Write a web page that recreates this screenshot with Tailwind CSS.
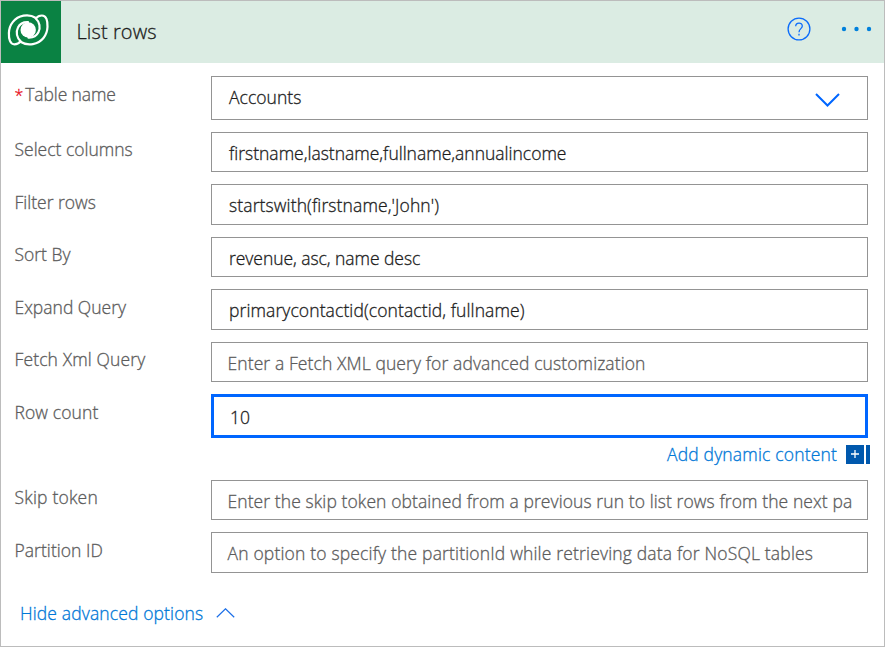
<!DOCTYPE html>
<html lang="en">
<head>
<meta charset="utf-8">
<title>List rows</title>
<script src="https://cdn.jsdelivr.net/npm/@tailwindcss/browser@4"></script>
</head>
<body class="bg-white">
<main class="w-[885px] h-[647px] border border-[#bcbcbc] bg-white overflow-hidden font-['Open_Sans','Noto_Sans',sans-serif] font-light text-[17.5px] leading-6 [-webkit-text-stroke:0.3px] text-[#5c5c5c]">
  <header class="flex h-[62px] items-center bg-[#dbece3]">
    <div class="h-[62px] w-[60px] bg-[#0a8243]">
      <svg class="size-full" viewBox="0 0 60 62" fill="none" stroke="#fff" stroke-width="2.200" stroke-linecap="round" stroke-linejoin="round">
        <circle cx="27.200" cy="28.900" r="7.700" fill="#fff" stroke="none"/>
        <path id="lobe" d="M35 17C31 14.500 27 13.800 22.500 14.700C13.500 16.500 8.200 23.500 7.900 32C7.700 38 9 43.300 13.500 43.300C16 43.300 18 42.300 19.700 40.300C15.800 37 14.600 31 17 26.500C19 22.500 22.500 21 27 21.200"/>
        <use href="#lobe" transform="rotate(180 27.200 28.900)"/>
      </svg>
    </div>
    <h1 class="ml-[15.500px] flex-1 text-[20px] leading-7 tracking-[0.1px] text-[#1c1c1c] font-light">List rows</h1>
    <svg class="mr-[29px] mb-[6px] h-6 w-6" viewBox="0 0 24 24" fill="none" stroke="#0b6cfb" stroke-width="1.300">
      <circle cx="12" cy="12" r="10.900"/>
      <path d="M8.700 9.300C8.700 5 15.300 5 15.300 9.100C15.300 11.700 12 11.700 12 15.200"/>
      <path d="M12 16.800v1.700"/>
    </svg>
    <svg class="mr-[12.500px] mb-[6px] h-2 w-8" viewBox="0 0 32 8" fill="#0080dc">
      <circle cx="4" cy="4" r="2.200"/><circle cx="16.500" cy="4" r="2.200"/><circle cx="29" cy="4" r="2.200"/>
    </svg>
  </header>
  <form class="pt-[13px] pl-[13.500px] pr-4">
    <div class="flex h-11 justify-between">
      <label class="pt-1.5 tracking-[-0.1px]"><span class="text-[#e81123] mr-[2px] text-[16px]">*</span>Table name</label>
      <div class="flex w-[657px] items-center justify-between border border-[#949494] pl-[17px] pr-[27px] text-[#1c1c1c]"><span class="mb-[2px] tracking-[0.05px]">Accounts</span>
        <svg class="mt-[3px] h-[14px] w-[25px]" viewBox="0 0 25 14" fill="none" stroke="#0066ff" stroke-width="2"><path d="M1 1l11.500 11.500L24 1"/></svg>
      </div>
    </div>
    <div class="mt-3 flex h-10 justify-between">
      <label class="pt-[5px]">Select columns</label>
      <div class="w-[657px] border border-[#949494] pt-2 pl-[17px] text-[#1c1c1c]"><span>firstname,lastname,fullname,annualincome</span></div>
    </div>
    <div class="mt-3 flex h-[41px] justify-between">
      <label class="pt-1.5">Filter rows</label>
      <div class="w-[657px] border border-[#949494] pt-2 pl-[17px] text-[#1c1c1c]"><span class="tracking-[0.12px]">startswith(firstname,'John')</span></div>
    </div>
    <div class="mt-3 flex h-10 justify-between">
      <label class="pt-[5px]">Sort By</label>
      <div class="w-[657px] border border-[#949494] pt-2 pl-[17px] text-[#1c1c1c]"><span class="tracking-[-0.05px]">revenue, asc, name desc</span></div>
    </div>
    <div class="mt-3 flex h-[41px] justify-between">
      <label class="pt-1.5">Expand Query</label>
      <div class="w-[657px] border border-[#949494] pt-2 pl-[17px] text-[#1c1c1c]"><span class="tracking-[0.1px]">primarycontactid(contactid, fullname)</span></div>
    </div>
    <div class="mt-3 flex h-10 justify-between">
      <label class="pt-[5px] tracking-[0.13px]">Fetch Xml Query</label>
      <div class="w-[657px] border border-[#949494] pt-2 pl-[15.500px]"><span class="tracking-[0.1px]">Enter a Fetch XML query for advanced customization</span></div>
    </div>
    <div class="mt-3 flex h-11 justify-between">
      <label class="pt-1.5 tracking-[0.1px]">Row count</label>
      <div class="w-[657px] border-3 border-[#0066ff] pt-2 pl-4 text-[#1c1c1c]"><span>10</span></div>
    </div>
    <div class="mt-1 -mr-0.5 flex h-6 items-center justify-end text-[#0078d7]">
      <span class="tracking-[0.17px]">Add dynamic content</span>
      <span class="ml-[9px] flex h-[19px] w-[18px] items-center justify-center bg-[#0058ad]"><svg class="size-2" viewBox="0 0 8 8" stroke="#fff" stroke-width="1.300"><path d="M4 0v8M0 4h8"/></svg></span>
      <span class="ml-[2px] h-[19px] w-1 bg-[#0058ad]"></span>
    </div>
    <div class="mt-[14px] flex h-10 justify-between">
      <label class="pt-[5px] tracking-[0.2px]">Skip token</label>
      <div class="w-[657px] border border-[#949494] pt-2 pl-[15.500px] pr-[15px]"><span class="block overflow-hidden whitespace-nowrap tracking-[0.09px]">Enter the skip token obtained from a previous run to list rows from the next pa</span></div>
    </div>
    <div class="mt-3 flex h-[41px] justify-between">
      <label class="pt-1.5 tracking-[0.05px]">Partition ID</label>
      <div class="w-[657px] border border-[#949494] pt-2 pl-[15.500px]"><span class="tracking-[0.17px]">An option to specify the partitionId while retrieving data for NoSQL tables</span></div>
    </div>
    <div class="mt-[28px] ml-[5.500px] flex items-center text-[#0078d7]">
      <span class="tracking-[0.13px]">Hide advanced options</span>
      <svg class="ml-[12.500px] mb-px h-[10px] w-[19px]" viewBox="0 0 19 10" fill="none" stroke="#1c6fe8" stroke-width="1.200"><path d="M.8 9.300L9.500.8l8.700 8.500"/></svg>
    </div>
  </form>
</main>
</body>
</html>
